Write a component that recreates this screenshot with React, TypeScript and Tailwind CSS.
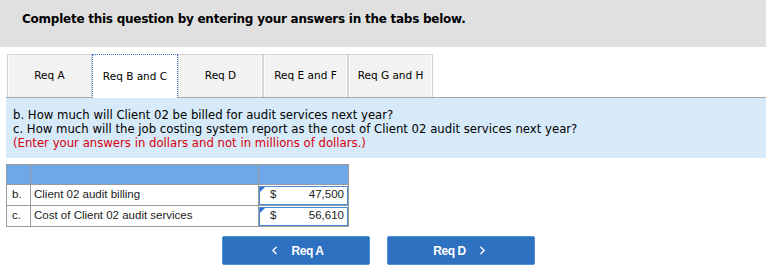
import { ChevronLeft, ChevronRight } from "lucide-react";

const tabs = ["Req A", "Req B and C", "Req D", "Req E and F", "Req G and H"];

const rows = [
  { key: "b.", label: "Client 02 audit billing", value: "47,500" },
  { key: "c.", label: "Cost of Client 02 audit services", value: "56,610" },
];

export default function App() {
  return (
    <main className="w-[774px] h-[277px] bg-white overflow-hidden font-['DejaVu_Sans',Verdana,sans-serif]">
      <div className="w-[766px] h-[47px] bg-[#e0e0e0] pl-[22px] pt-[10px]">
        <h1 className="text-[12px] font-bold text-black tracking-[-0.25px]">
          Complete this question by entering your answers in the tabs below.
        </h1>
      </div>

      <div className="flex pl-[7px] mt-[7px] h-[43px]">
        {tabs.map((t, i) => (
          <div
            key={t}
            className={
              i === 1
                ? "w-[86px] h-[44px] flex items-center justify-center bg-white border border-dotted border-[#3b6fd0] border-b-0 text-[10.5px] text-black z-10"
                : "w-[85px] flex items-center justify-center bg-[#f2f2f2] border border-[#d4d4d4] border-b-0 shadow-[inset_1px_0_0_#fff,inset_-1px_0_0_#fff] text-[10.5px] text-black"
            }
          >
            {t}
          </div>
        ))}
      </div>

      <div className="ml-[6px] w-[760px] h-[61px] bg-[#d7eaf9] border-t border-[#a8a8a8] pl-[7px] pt-[10px] text-[11.7px] leading-[14px] text-black">
        <p>b. How much will Client 02 be billed for audit services next year?</p>
        <p>c. How much will the job costing system report as the cost of Client 02 audit services next year?</p>
        <p className="text-[#d8000c]">(Enter your answers in dollars and not in millions of dollars.)</p>
      </div>

      <table className="ml-[6px] mt-[6px] border-collapse font-['Liberation_Sans',Arial,sans-serif] text-[11.5px] text-[#222]">
        <thead>
          <tr className="h-[20px] bg-[#6fa8e8]">
            <th className="w-[24px] border border-[#9a9a9a]" />
            <th className="w-[228px] border border-[#9a9a9a]" />
            <th className="w-[90px] border border-[#9a9a9a]" />
          </tr>
        </thead>
        <tbody>
          {rows.map((r) => (
            <tr key={r.key} className="h-[21px]">
              <td className="border border-[#9a9a9a] pl-[5px]">{r.key}</td>
              <td className="border border-[#9a9a9a] pl-[3px]">{r.label}</td>
              <td className="border border-[#9a9a9a] p-0">
                <div className="relative flex justify-between items-center h-[19px] border border-[#4a8ad8] pl-[10px] pr-[3px]">
                  <span className="absolute left-0 top-0 w-0 h-0 border-t-[5px] border-t-[#2f6fd0] border-r-[5px] border-r-transparent" />
                  <span>$</span>
                  <span>{r.value}</span>
                </div>
              </td>
            </tr>
          ))}
        </tbody>
      </table>

      <div className="flex gap-[17px] pl-[222px] mt-[9px] font-['Liberation_Sans',Arial,sans-serif]">
        <button className="w-[148px] h-[29px] rounded-[2px] bg-[#2e71c1] border border-[#4f8fd6] text-white text-[12px] font-bold flex items-center justify-center gap-[10px] tracking-[-0.4px]">
          <ChevronLeft size={13} strokeWidth={2.5} />
          Req A
        </button>
        <button className="w-[148px] h-[29px] rounded-[2px] bg-[#2e71c1] border border-[#4f8fd6] text-white text-[12px] font-bold flex items-center justify-center gap-[10px] tracking-[-0.4px]">
          Req D
          <ChevronRight size={13} strokeWidth={2.5} />
        </button>
      </div>
    </main>
  );
}
